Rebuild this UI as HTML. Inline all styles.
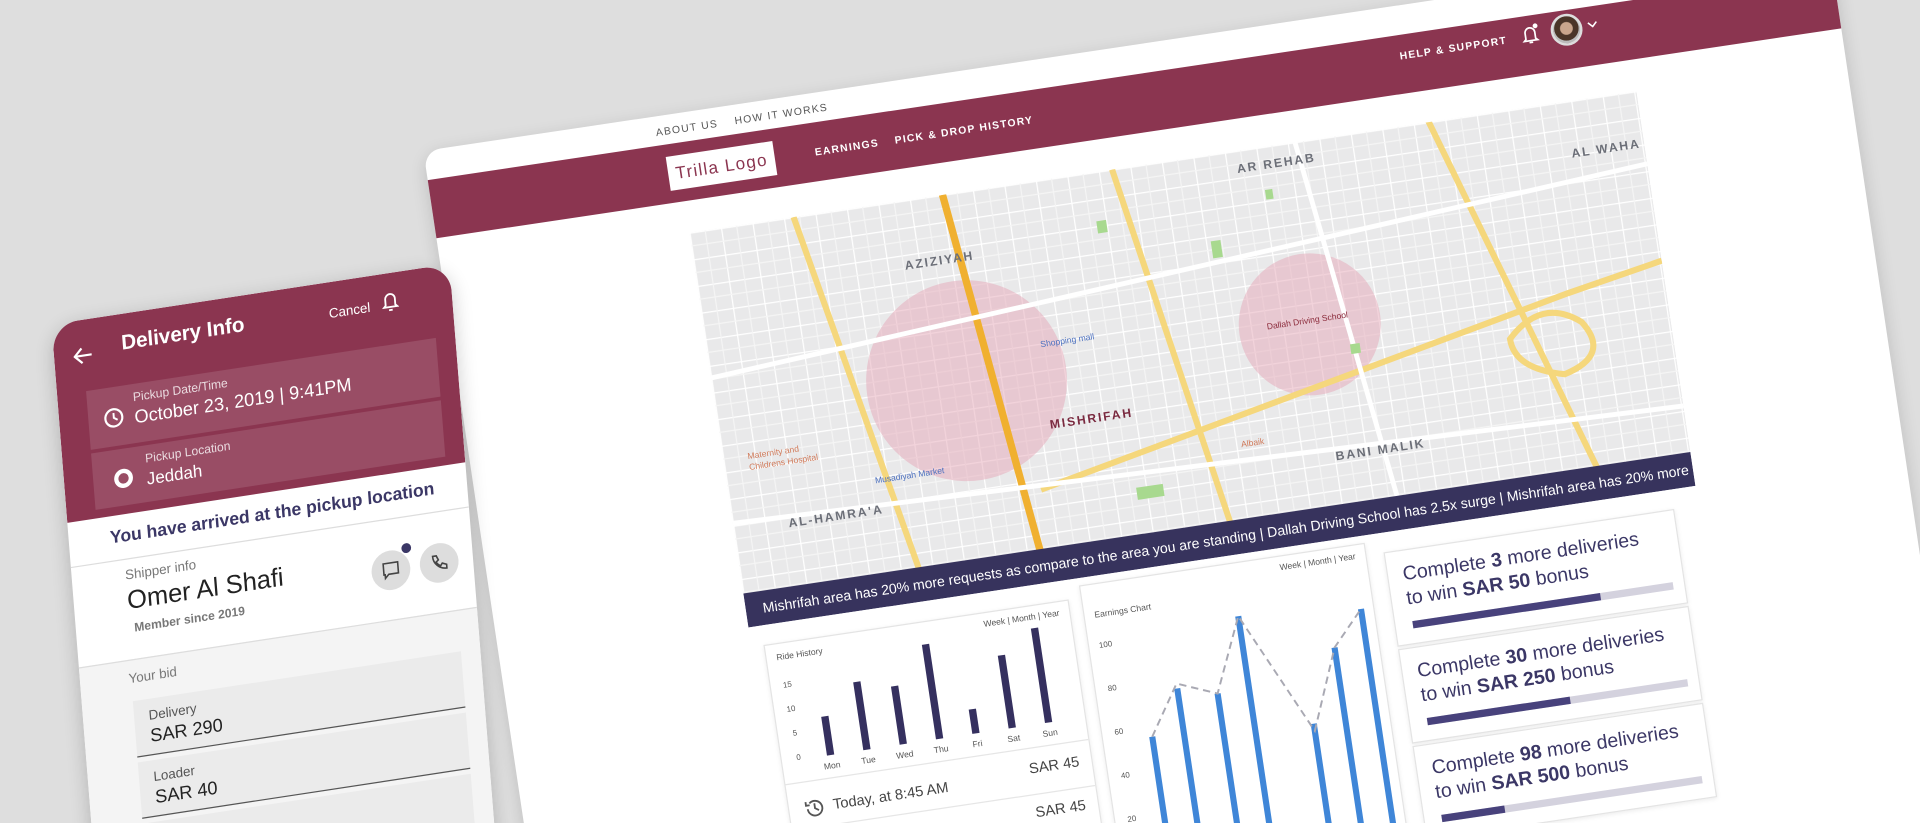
<!DOCTYPE html>
<html><head><meta charset="utf-8">
<style>
*{box-sizing:border-box;margin:0;padding:0}
html,body{width:1920px;height:823px;overflow:hidden;background:#dedede;font-family:"Liberation Sans",Arial,sans-serif}
#clip{position:fixed;left:0;top:0;width:1920px;height:823px;overflow:hidden;background:#dedede}
#wrap{position:absolute;left:0;top:0;width:1568px;height:672px;transform-origin:0 0;transform:scale(1.2245)}
.abs{position:absolute}
#desk{position:absolute;left:563px;top:190px;width:0;height:0;transform-origin:0 0;transform:rotate(-8.5deg)}
#panel{position:absolute;left:-205px;top:-98px;width:1160px;height:1000px;background:#fff;border-radius:14px 14px 0 0;box-shadow:0 4px 14px rgba(0,0,0,.15)}
#maroon{position:absolute;left:0;top:24px;width:1160px;height:48px;background:#8b3550}
.nav{color:#fff;font-size:8.5px;letter-spacing:1px;font-weight:bold}
.card{position:absolute;background:#fff;border:1px solid #e4e4e4;box-shadow:0 1px 4px rgba(0,0,0,.08)}
.small{font-size:8px;color:#555}
.rc{position:absolute;left:0;width:240px;height:78px;background:#fff;border:1px solid #e4e4e4;box-shadow:0 1px 4px rgba(0,0,0,.08)}
.rc .t{position:absolute;left:12px;top:10px;font-size:16px;color:#3b3766;line-height:20px}
.rc .bar{position:absolute;left:14px;top:58px;width:215px;height:6px;background:#d4d2de}
.rc .bar i{display:block;height:6px;background:#48427c}
#phone{position:absolute;left:42px;top:265px;width:330px;height:640px;transform-origin:0 0;transform:matrix(0.985,-0.15,0.08,1,0,0);background:#fff;border-radius:22px 22px 0 0;box-shadow:0 4px 16px rgba(0,0,0,.2);overflow:hidden}
.ph{color:#fff}
.fld{position:absolute;left:42px;width:272px;height:46px;background:#ebebeb;border-bottom:1.5px solid #555}
.fld .l{position:absolute;left:12px;top:8px;font-size:11px;color:#555}
.fld .v{position:absolute;left:12px;top:22px;font-size:15px;color:#222}
</style></head><body>
<div id="clip">
<div id="wrap">
<div id="desk">
 <div id="panel">
  <div class="abs" style="left:190px;top:8px;font-size:8.5px;color:#555;letter-spacing:1px">ABOUT US</div>
  <div class="abs" style="left:255px;top:8px;font-size:8.5px;color:#555;letter-spacing:1px">HOW IT WORKS</div>
  <div id="maroon">
   <div class="abs" style="left:195px;top:10px;width:88px;height:28px;background:#fff;color:#8b3550;font-size:14px;letter-spacing:1px;line-height:28px;text-align:center">Trilla Logo</div>
   <div class="abs nav" style="left:316px;top:19px">EARNINGS</div>
   <div class="abs nav" style="left:382px;top:19px">PICK &amp; DROP HISTORY</div>
   <div class="abs nav" style="left:800px;top:12px">HELP &amp; SUPPORT</div>
   <svg class="abs" style="left:900px;top:6px" width="16" height="18" viewBox="0 0 16 18"><path d="M4 13V8a4 4 0 0 1 8 0v5l1.5 1.5h-11z" fill="none" stroke="#fff" stroke-width="1.4"/><path d="M6.5 16h3" stroke="#fff" stroke-width="1.4"/><circle cx="13" cy="3" r="2" fill="#fff"/></svg>
   <div class="abs" style="left:925px;top:3px;width:26px;height:26px;border-radius:50%;background:radial-gradient(circle at 50% 45%,#c9a58c 0 30%,#4a3528 34% 60%,#bbb 62%);border:2px solid #ddd"></div>
   <svg class="abs" style="left:955px;top:12px" width="9" height="6"><path d="M1 1l3.5 3.5L8 1" stroke="#fff" fill="none" stroke-width="1.3"/></svg>
  </div>
 </div>

 <svg class="abs" style="left:0;top:0" width="782" height="326" viewBox="0 0 782 326">
  <defs>
   <pattern id="g" width="26" height="22" patternUnits="userSpaceOnUse"><rect width="26" height="22" fill="#e9e9ea"/><path d="M0 0H26M0 0V22" stroke="#fff" stroke-width="2"/><path d="M13 0V22M0 11H26" stroke="#f5f5f5" stroke-width="1"/></pattern>
  </defs>
  <rect width="782" height="326" fill="url(#g)"/>
  <circle cx="206" cy="153" r="82" fill="#e6a8b8" opacity=".5"/>
  <circle cx="490" cy="149" r="58" fill="#e6a8b8" opacity=".5"/>
  <g stroke="#f5d77c" stroke-width="5" fill="none">
   <path d="M86 0 L145 300"/><path d="M349 0 L402 300"/><path d="M609 -5 L705 300"/>
   <path d="M253 250 L702 155 L782 140"/><path d="M650 185 q30 -30 60 -5 q20 30 -20 40 q-40 -10 -40 -35z"/>
  </g>
  <path d="M209 0 L245 300" stroke="#f0b030" stroke-width="6"/>
  <g stroke="#fff" stroke-width="4" fill="none"><path d="M0 120 L782 60"/><path d="M0 240 L782 260"/><path d="M500 0 L540 300"/></g>
  <g fill="#a8d98f"><rect x="330" y="40" width="8" height="10"/><rect x="420" y="70" width="8" height="14"/><rect x="470" y="35" width="6" height="8"/><rect x="520" y="170" width="8" height="8"/><rect x="330" y="260" width="22" height="10"/></g>
  <g font-size="10" font-weight="bold" fill="#6c6f78" letter-spacing="1.5">
   <text x="170" y="56">AZIZIYAH</text><text x="450" y="18">AR REHAB</text><text x="268" y="202" fill="#7a2a40">MISHRIFAH</text>
   <text x="45" y="250">AL-HAMRA'A</text><text x="495" y="262">BANI MALIK</text><text x="722" y="46">AL WAHA</text>
  </g>
  <g font-size="7" fill="#4a6fbf"><text x="270" y="135">Shopping mall</text><text x="120" y="225">Musadiyah Market</text></g>
  <g font-size="7" fill="#8b2a3a"><text x="455" y="148">Dallah Driving School</text></g>
  <g font-size="7" fill="#d07a5a"><text x="20" y="190">Maternity and</text><text x="20" y="199">Childrens Hospital</text><text x="420" y="240">Albaik</text></g>
  <rect x="0" y="298" width="782" height="28" fill="#37335d"/>
  <text x="14" y="316" font-size="11.5" fill="#fff">Mishrifah area has 20% more requests as compare to the area you are standing   |   Dallah Driving School has 2.5x surge   |   Mishrifah area has 20% more requests as compare</text>
 </svg>

 <div class="card" style="left:10px;top:342px;width:252px;height:340px">
  <div class="abs small" style="left:8px;top:8px;font-size:7px">Ride History</div>
  <div class="abs small" style="right:8px;top:6px;font-size:7px">Week | Month | Year</div>
  <svg class="abs" style="left:0;top:0" width="252" height="120">
   <g font-size="6.5" fill="#555"><text x="10" y="36">15</text><text x="10" y="56">10</text><text x="12" y="76">5</text><text x="12" y="96">0</text></g>
   <g fill="#35305f">
    <rect x="37" y="64" width="6" height="32"/><rect x="67" y="40" width="6" height="56"/><rect x="97" y="48" width="6" height="48"/><rect x="127" y="18" width="6" height="78"/><rect x="157" y="76" width="6" height="20"/><rect x="187" y="36" width="6" height="60"/><rect x="217" y="18" width="6" height="78"/>
   </g>
   <g font-size="7" fill="#555" text-anchor="middle"><text x="40" y="107">Mon</text><text x="70" y="107">Tue</text><text x="100" y="107">Wed</text><text x="130" y="107">Thu</text><text x="160" y="107">Fri</text><text x="190" y="107">Sat</text><text x="220" y="107">Sun</text></g>
  </svg>
  <div class="abs" style="left:0;top:114px;width:250px;border-top:1px solid #e6e6e6"></div>
  <svg class="abs" style="left:12px;top:128px" width="18" height="18" viewBox="0 0 18 18"><path d="M3 9a6 6 0 1 0 2-4.5" fill="none" stroke="#555" stroke-width="1.5"/><path d="M2 3v3h3" fill="none" stroke="#555" stroke-width="1.5"/><path d="M9 5v4l3 2" fill="none" stroke="#555" stroke-width="1.5"/></svg>
  <div class="abs" style="left:36px;top:129px;font-size:12px;color:#444">Today, at 8:45 AM</div>
  <div class="abs" style="right:10px;top:124px;font-size:12px;color:#444">SAR 45</div>
  <div class="abs" style="left:0;top:152px;width:250px;border-top:1px solid #e6e6e6"></div>
  <div class="abs" style="left:36px;top:164px;font-size:12px;color:#444">Today, at 8:45 AM</div>
  <div class="abs" style="right:10px;top:160px;font-size:12px;color:#444">SAR 45</div>
  <div class="abs" style="left:0;top:188px;width:250px;border-top:1px solid #e6e6e6"></div>
 </div>

 <div class="card" style="left:272px;top:332px;width:236px;height:420px">
  <div class="abs small" style="left:8px;top:22px;font-size:7px">Earnings Chart</div>
  <div class="abs small" style="right:8px;top:6px;font-size:7px">Week | Month | Year</div>
  <svg class="abs" style="left:0;top:0" width="236" height="420">
   <g font-size="6.5" fill="#555"><text x="8" y="52">100</text><text x="10" y="88">80</text><text x="10" y="124">60</text><text x="10" y="160">40</text><text x="10" y="196">20</text></g>
   <g stroke="#3f86d8" stroke-width="5"><path d="M40 130V420"/><path d="M66 94V420"/><path d="M98 103V420"/><path d="M124 43V420"/><path d="M172 139V420"/><path d="M198 80V420"/><path d="M224 52V420"/></g>
   <path d="M40 130 L66 90 L98 103 L124 43 L172 145 L198 80 L224 52" fill="none" stroke="#a9a9b3" stroke-width="1.6" stroke-dasharray="6 4"/>
  </svg>
 </div>

 <div class="abs" style="left:522px;top:342px">
  <div class="rc" style="top:0"><div class="t">Complete <b>3</b> more deliveries<br>to win <b>SAR 50</b> bonus</div><div class="bar"><i style="width:72%"></i></div></div>
  <div class="rc" style="top:80px"><div class="t">Complete <b>30</b> more deliveries<br>to win <b>SAR 250</b> bonus</div><div class="bar"><i style="width:55%"></i></div></div>
  <div class="rc" style="top:160px"><div class="t">Complete <b>98</b> more deliveries<br>to win <b>SAR 500</b> bonus</div><div class="bar"><i style="width:24%"></i></div></div>
 </div>
</div>

<div id="phone">
 <div class="abs" style="left:0;top:0;width:330px;height:162px;background:#8b3550"></div>
 <svg class="abs" style="left:16px;top:22px" width="16" height="14"><path d="M15 7H2M7 1L1 7l6 6" stroke="#fff" stroke-width="1.8" fill="none"/></svg>
 <div class="abs ph" style="left:56px;top:14px;font-size:17px;font-weight:bold">Delivery Info</div>
 <div class="abs ph" style="left:228px;top:20px;font-size:11px">Cancel</div>
 <svg class="abs" style="left:272px;top:14px" width="14" height="18" viewBox="0 0 14 18"><path d="M3 12V7a4 4 0 0 1 8 0v5l1.5 1.5h-11z" fill="none" stroke="#fff" stroke-width="1.5"/><path d="M5.5 16h3" stroke="#fff" stroke-width="1.5"/></svg>
 <div class="abs" style="left:24px;top:58px;width:290px;height:48px;background:rgba(255,255,255,.12)"></div>
 <div class="abs" style="left:24px;top:109px;width:290px;height:46px;background:rgba(255,255,255,.12)"></div>
 <svg class="abs" style="left:36px;top:74px" width="18" height="18"><circle cx="9" cy="9" r="7" fill="none" stroke="#fff" stroke-width="1.8"/><path d="M9 5v4l3 2" stroke="#fff" stroke-width="1.6" fill="none"/></svg>
 <div class="abs ph" style="left:62px;top:64px;font-size:10px;opacity:.8">Pickup Date/Time</div>
 <div class="abs ph" style="left:62px;top:77px;font-size:15px">October 23, 2019 | 9:41PM</div>
 <svg class="abs" style="left:40px;top:124px" width="18" height="18"><circle cx="9" cy="9" r="6" fill="none" stroke="#fff" stroke-width="3.5"/></svg>
 <div class="abs ph" style="left:68px;top:115px;font-size:10px;opacity:.8">Pickup Location</div>
 <div class="abs ph" style="left:68px;top:128px;font-size:14px">Jeddah</div>
 <div class="abs" style="left:34px;top:172px;font-size:14.5px;color:#3b3766;font-weight:bold">You have arrived at the pickup location</div>
 <div class="abs" style="left:0;top:198px;width:330px;border-top:1px solid #ddd"></div>
 <div class="abs" style="left:44px;top:206px;font-size:11px;color:#777">Shipper info</div>
 <div class="abs" style="left:44px;top:221px;font-size:21px;color:#222">Omer Al Shafi</div>
 <div class="abs" style="left:48px;top:250px;font-size:10px;color:#777;font-weight:bold">Member since 2019</div>
 <div class="abs" style="left:246px;top:224px;width:32px;height:32px;border-radius:50%;background:#ddd"></div>
 <svg class="abs" style="left:254px;top:232px" width="16" height="16"><path d="M2 2h12v9H6l-3 3V11H2z" fill="none" stroke="#444" stroke-width="1.3"/></svg>
 <div class="abs" style="left:272px;top:220px;width:8px;height:8px;border-radius:50%;background:#3b3766"></div>
 <div class="abs" style="left:286px;top:224px;width:32px;height:32px;border-radius:50%;background:#ddd"></div>
 <svg class="abs" style="left:294px;top:232px" width="16" height="16"><path d="M3 2l3 0 1.5 3.5-2 1.5a8 8 0 0 0 3.5 3.5l1.5-2 3.5 1.5v3C8 13 3 8 3 2z" fill="none" stroke="#444" stroke-width="1.3"/></svg>
 <div class="abs" style="left:0;top:280px;width:330px;height:400px;background:#f4f4f4;border-top:1px solid #ddd"></div>
 <div class="abs" style="left:40px;top:290px;font-size:11px;color:#777">Your bid</div>
 <div class="fld" style="top:314px"><div class="l">Delivery</div><div class="v">SAR 290</div></div>
 <div class="fld" style="top:364px"><div class="l">Loader</div><div class="v">SAR 40</div></div>
 <div class="fld" style="top:414px"><div class="l">Other</div><div class="v">SAR 0</div></div>
</div>
</div>
</div>
</body></html>
